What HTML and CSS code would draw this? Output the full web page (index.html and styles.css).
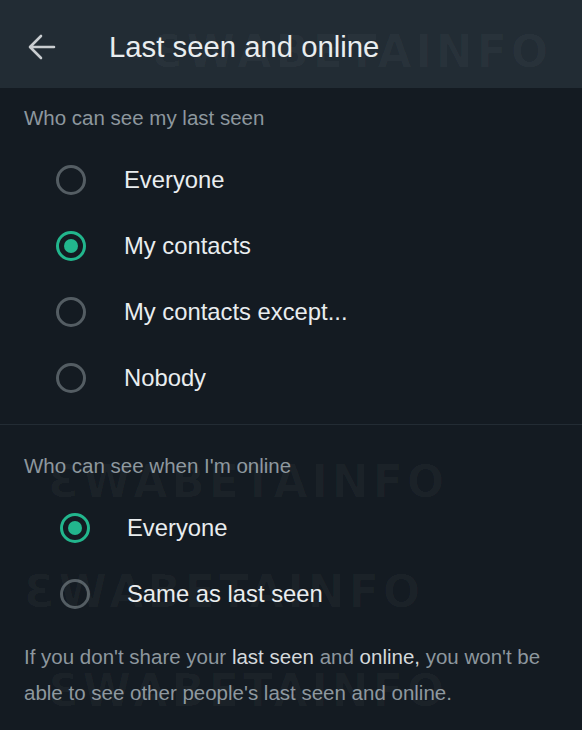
FILE: index.html
```html
<!DOCTYPE html>
<html lang="en">
<head>
<meta charset="utf-8">
<title>Last seen and online</title>
<link rel="stylesheet" href="styles.css">
</head>
<body>
<div class="screen">
  <header class="topbar">
    <svg class="back" width="30" height="28" viewBox="0 0 30 28" aria-hidden="true">
      <path d="M27 14 H4 M14 3 L3 14 L14 25" fill="none" stroke="#c9cdd0" stroke-width="2.6" stroke-linecap="round" stroke-linejoin="round"/>
    </svg>
    <h1 class="title">Last seen and online</h1>
  </header>

  <section class="group group-first">
    <div class="label">Who can see my last seen</div>
    <div class="option"><span class="radio"></span><span class="opt-text">Everyone</span></div>
    <div class="option"><span class="radio on"></span><span class="opt-text">My contacts</span></div>
    <div class="option"><span class="radio"></span><span class="opt-text">My contacts except...</span></div>
    <div class="option"><span class="radio"></span><span class="opt-text">Nobody</span></div>
  </section>

  <div class="divider"></div>

  <section class="group group-second">
    <div class="label">Who can see when I'm online</div>
    <div class="option"><span class="radio on"></span><span class="opt-text">Everyone</span></div>
    <div class="option"><span class="radio"></span><span class="opt-text">Same as last seen</span></div>
  </section>

  <p class="note">If you don't share your <b>last seen</b> and <b>online,</b> you won't be able to see other people's last seen and online.</p>

  <div class="wm wm-1" aria-hidden="true">ƐWABETAINFO</div>
  <div class="wm wm-2" aria-hidden="true">ƐWABETAINFO</div>
  <div class="wm wm-3" aria-hidden="true">ƐWABETAINFO</div>
  <div class="wm wm-4" aria-hidden="true">ƐWABETAINFO</div>
</div>
</body>
</html>
```

FILE: styles.css
```css
* { box-sizing: border-box; }

html, body {
  margin: 0;
  padding: 0;
  background: #141b22;
}

body {
  font-family: "Liberation Sans", Arial, sans-serif;
  color: #e9edef;
}

.screen {
  position: relative;
  width: 582px;
  height: 730px;
  overflow: hidden;
  background: #141b22;
}

.topbar {
  height: 88px;
  background: #222c34;
  display: flex;
  align-items: center;
  padding-left: 27px;
  padding-top: 5px;
}

.back { display: block; }

.title {
  margin: 0 0 0 52px;
  font-size: 29.3px;
  font-weight: normal;
  color: #e9edef;
}

.label {
  font-size: 20.5px;
  line-height: 30px;
  color: #8d979e;
  padding-left: 24px;
}

.group-first .label { margin-top: 15px; margin-bottom: 14px; }
.group-second .label { margin-top: 26px; margin-bottom: 14px; }

.option {
  height: 66px;
  display: flex;
  align-items: center;
}

.group-first .option { padding-left: 56px; gap: 38px; }
.group-second .option { padding-left: 60px; gap: 37px; }

.radio {
  width: 30px;
  height: 30px;
  border-radius: 50%;
  border: 3px solid #545d63;
  display: flex;
  align-items: center;
  justify-content: center;
  flex: none;
}

.radio.on { border-color: #22b68d; }
.radio.on::after {
  content: "";
  width: 14px;
  height: 14px;
  border-radius: 50%;
  background: #22b68d;
}

.opt-text {
  font-size: 23.8px;
  color: #e9edef;
}

.divider {
  margin-top: 13px;
  height: 1px;
  background: #232c34;
}

.note {
  margin: 12px 0 0;
  padding: 0 24px;
  font-size: 20.5px;
  line-height: 36px;
  color: #8d979e;
}

.note b {
  font-weight: normal;
  color: #d4d9dc;
}

.wm {
  position: absolute;
  font-family: "DejaVu Sans", sans-serif;
  font-weight: bold;
  font-size: 44px;
  letter-spacing: 4px;
  color: rgba(255, 255, 255, 0.028);
  pointer-events: none;
  white-space: nowrap;
}

.wm-1 { left: 152px; top: 26px; }
.wm-2 { left: 48px; top: 456px; }
.wm-3 { left: 24px; top: 566px; }
.wm-4 { left: 48px; top: 665px; }
```
